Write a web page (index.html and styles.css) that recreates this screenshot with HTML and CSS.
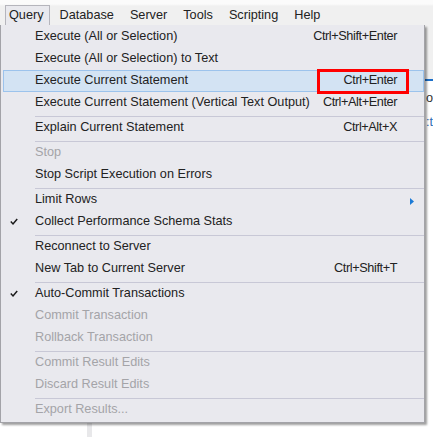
FILE: index.html
```html
<!DOCTYPE html>
<html>
<head>
<meta charset="utf-8">
<link rel="stylesheet" href="styles.css">
</head>
<body>
<div class="app">
  <div class="menubar">
    <span class="mb open">Query</span>
    <span class="mb">Database</span>
    <span class="mb">Server</span>
    <span class="mb">Tools</span>
    <span class="mb">Scripting</span>
    <span class="mb">Help</span>
  </div>
  <div class="toolbar"></div>
  <div class="tabline"></div>
  <div class="workspace">
    <div class="pane"></div>
    <div class="splitter"></div>
    <div class="pane"></div>
    <div class="pane-right">
      <div class="code">o</div>
      <div class="code link">:t</div>
    </div>
  </div>

  <div class="menu">
    <div class="mi"><span class="ck"></span><span class="lb">Execute (All or Selection)</span><span class="sc">Ctrl+Shift+Enter</span></div>
    <div class="mi"><span class="ck"></span><span class="lb">Execute (All or Selection) to Text</span></div>
    <div class="mi hl"><span class="ck"></span><span class="lb">Execute Current Statement</span><span class="sc">Ctrl+Enter</span><span class="mark"></span></div>
    <div class="mi"><span class="ck"></span><span class="lb">Execute Current Statement (Vertical Text Output)</span><span class="sc">Ctrl+Alt+Enter</span></div>
    <div class="sep"></div>
    <div class="mi"><span class="ck"></span><span class="lb">Explain Current Statement</span><span class="sc">Ctrl+Alt+X</span></div>
    <div class="sep"></div>
    <div class="mi dis"><span class="ck"></span><span class="lb">Stop</span></div>
    <div class="mi"><span class="ck"></span><span class="lb">Stop Script Execution on Errors</span></div>
    <div class="sep"></div>
    <div class="mi"><span class="ck"></span><span class="lb">Limit Rows</span><svg class="arrow" width="4" height="7" viewBox="0 0 4 7"><path d="M0 0L4 3.5L0 7Z" fill="#1b7ad6"/></svg></div>
    <div class="mi"><span class="ck"><svg width="8" height="7" viewBox="0 0 8 7"><path d="M0.8 3.6L3 5.9L7.2 0.9" fill="none" stroke="#1a1a1a" stroke-width="1.5"/></svg></span><span class="lb">Collect Performance Schema Stats</span></div>
    <div class="sep"></div>
    <div class="mi"><span class="ck"></span><span class="lb">Reconnect to Server</span></div>
    <div class="mi"><span class="ck"></span><span class="lb">New Tab to Current Server</span><span class="sc">Ctrl+Shift+T</span></div>
    <div class="sep"></div>
    <div class="mi"><span class="ck"><svg width="8" height="7" viewBox="0 0 8 7"><path d="M0.8 3.6L3 5.9L7.2 0.9" fill="none" stroke="#1a1a1a" stroke-width="1.5"/></svg></span><span class="lb">Auto-Commit Transactions</span></div>
    <div class="mi dis"><span class="ck"></span><span class="lb">Commit Transaction</span></div>
    <div class="mi dis"><span class="ck"></span><span class="lb">Rollback Transaction</span></div>
    <div class="sep"></div>
    <div class="mi dis"><span class="ck"></span><span class="lb">Commit Result Edits</span></div>
    <div class="mi dis"><span class="ck"></span><span class="lb">Discard Result Edits</span></div>
    <div class="sep"></div>
    <div class="mi dis"><span class="ck"></span><span class="lb">Export Results...</span></div>
  </div>
</div>
</body>
</html>
```
FILE: styles.css
```css
html, body {
  margin: 0;
  padding: 0;
  background: #ffffff;
}

.app {
  position: relative;
  width: 433px;
  height: 437px;
  overflow: hidden;
  font-family: "Liberation Sans", Arial, sans-serif;
  font-size: 12.7px;
  color: #222222;
  display: flex;
  flex-direction: column;
}

.menubar {
  display: flex;
  height: 25px;
  box-sizing: border-box;
  padding-left: 5px;
  background: linear-gradient(to bottom, #fbfbfb 0, #fbfbfb 4px, #f0f0f0 6px, #f0f0f0 100%);
  flex: none;
}

.mb {
  margin-top: 5px;
  height: 20px;
  box-sizing: border-box;
  padding: 0 5px 0 3px;
  margin-right: 6px;
  border: 1px solid transparent;
  border-bottom: 0;
  line-height: 19px;
  white-space: nowrap;
}

.mb.open {
  background: #e9e9ee;
  border-color: #b5b5bc;
}

.toolbar {
  height: 54px;
  background: #f0f0f0;
  flex: none;
}

.tabline {
  height: 2px;
  background: #1c6fc8;
  flex: none;
}

.workspace {
  flex: 1;
  display: grid;
  grid-template-columns: 87px 5px 334px 1fr;
  background: #ffffff;
}

.splitter {
  background: #e8e8ea;
}

.pane-right {
  padding-top: 5px;
  line-height: 24px;
  white-space: nowrap;
  overflow: hidden;
}

.code {
  color: #333333;
}

.code.link {
  color: #2e6db4;
}

/* dropdown menu */
.menu {
  position: absolute;
  left: 0;
  top: 25px;
  width: 425px;
  box-sizing: border-box;
  background: #e9e9ee;
  border: 1px solid #a3a3a8;
  border-top: 0;
  padding: 1px 0 1px 0;
  box-shadow: 2px 2px 2px rgba(0, 0, 0, 0.38);
  z-index: 2;
}

.mi {
  position: relative;
  display: flex;
  height: 22px;
  box-sizing: border-box;
  margin-left: 2px;
  border: 1px solid transparent;
  padding-top: 1px;
  padding-bottom: 2px;
  line-height: 17px;
  white-space: nowrap;
}

.mi.hl {
  background: #d3e3f3;
  border-color: #9cc3ec;
}

.mi.dis {
  color: #a4a4a8;
}

.ck {
  width: 31px;
  flex: none;
}

.ck svg {
  display: block;
  margin: 5px 0 0 6px;
}

.lb {
  flex: 1;
}

.sc {
  margin-right: 26px;
  letter-spacing: -0.4px;
}

.arrow {
  display: block;
  flex: none;
  margin: 7px 9px 0 0;
}

.sep {
  height: 3px;
  box-sizing: border-box;
  margin-left: 34px;
  border-bottom: 1px solid #c8c8d6;
}

.mark {
  position: absolute;
  left: 313px;
  top: -2px;
  width: 92px;
  height: 25px;
  box-sizing: border-box;
  border: 3px solid #ff0000;
}
```
